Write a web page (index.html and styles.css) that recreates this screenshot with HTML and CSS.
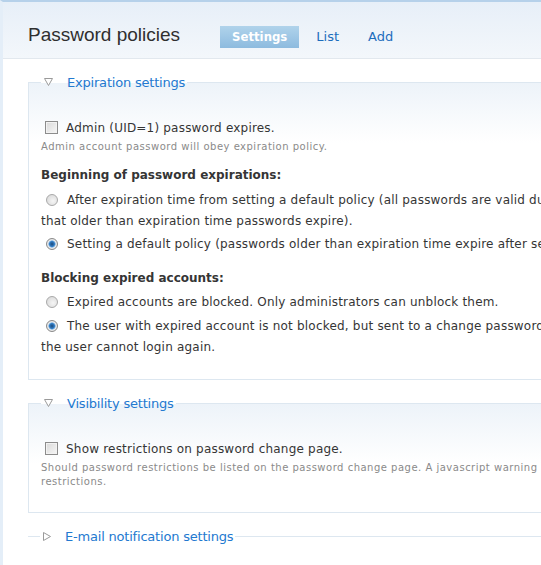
FILE: index.html
```html
<!DOCTYPE html>
<html lang="en">
<head>
<meta charset="utf-8">
<title>Password policies</title>
<link rel="stylesheet" href="styles.css">
</head>
<body>
<div class="page">
  <header class="head">
    <h1 class="title">Password policies</h1>
    <nav class="tabs">
      <a class="tab active" href="#">Settings</a>
      <a class="tab" href="#">List</a>
      <a class="tab" href="#">Add</a>
    </nav>
  </header>

  <form class="content">
    <fieldset class="group">
      <legend class="legend">
        <svg class="arrow" width="9" height="8" viewBox="0 0 9 8"><polygon points="0.5,0.5 8.5,0.5 4.5,7.5" fill="#fff" stroke="#9a9a9a" stroke-width="1"/></svg>
        <span class="legend-text">Expiration settings</span>
      </legend>

      <div class="item item-first">
        <label class="opt"><input class="box" type="checkbox"> Admin (UID=1) password expires.</label>
        <div class="desc">Admin account password will obey expiration policy.</div>
      </div>

      <div class="item">
        <div class="label">Beginning of password expirations:</div>
        <label class="opt"><input class="dot" type="radio" name="begin"> After expiration time from setting a default policy (all passwords are valid during the expiration time, after<br>that older than expiration time passwords expire).</label>
        <label class="opt"><input class="dot" type="radio" name="begin" checked> Setting a default policy (passwords older than expiration time expire after setting the default policy).</label>
      </div>

      <div class="item">
        <div class="label">Blocking expired accounts:</div>
        <label class="opt"><input class="dot" type="radio" name="block"> Expired accounts are blocked. Only administrators can unblock them.</label>
        <label class="opt"><input class="dot" type="radio" name="block" checked> The user with expired account is not blocked, but sent to a change password page. If the password is not changed,<br>the user cannot login again.</label>
      </div>
    </fieldset>

    <fieldset class="group">
      <legend class="legend">
        <svg class="arrow" width="9" height="8" viewBox="0 0 9 8"><polygon points="0.5,0.5 8.5,0.5 4.5,7.5" fill="#fff" stroke="#9a9a9a" stroke-width="1"/></svg>
        <span class="legend-text">Visibility settings</span>
      </legend>

      <div class="item item-first">
        <label class="opt"><input class="box" type="checkbox"> Show restrictions on password change page.</label>
        <div class="desc">Should password restrictions be listed on the password change page. A javascript warning will be shown on the<br>restrictions.</div>
      </div>
    </fieldset>

    <fieldset class="group collapsed">
      <legend class="legend">
        <svg class="arrow" width="8" height="9" viewBox="0 0 8 9"><polygon points="0.5,0.5 7.5,4.5 0.5,8.5" fill="#fff" stroke="#9a9a9a" stroke-width="1"/></svg>
        <span class="legend-text">E-mail notification settings</span>
      </legend>
    </fieldset>
  </form>
</div>
</body>
</html>
```

FILE: styles.css
```css
html, body {
  margin: 0;
  padding: 0;
  background: #fff;
  overflow: hidden;
}

body {
  font-family: "DejaVu Sans", Verdana, sans-serif;
  font-size: 12px;
  letter-spacing: 0.2px;
  color: #353535;
}

.page {
  width: 820px;
  min-height: 565px;
  border-top: 2px solid #b6d1ea;
  border-left: 3px solid #e4eef8;
  box-sizing: border-box;
}

/* Header with title and tabs */
.head {
  display: flex;
  align-items: center;
  height: 57px;
  box-sizing: border-box;
  padding: 14px 0 0 25px;
  background: linear-gradient(#e7eff8, #f3f7fb);
  border-bottom: 1px solid #e2e8ee;
}

.title {
  margin: 0;
  font-family: "Liberation Sans", Arial, sans-serif;
  font-weight: normal;
  font-size: 19px;
  letter-spacing: 0;
  color: #2f2f2f;
  position: relative;
  top: -2px;
}

.tabs {
  display: flex;
  gap: 5px;
  margin-left: 40px;
}

.tab {
  display: block;
  height: 22px;
  line-height: 22px;
  padding: 0 12px;
  font-size: 13px;
  letter-spacing: 0;
  color: #1c6dbd;
  text-decoration: none;
}

.tab.active {
  background: linear-gradient(#b0d3eb, #8dbbdf);
  color: #fff;
  font-weight: bold;
  font-family: "DejaVu Sans Condensed", "DejaVu Sans", sans-serif;
  font-stretch: condensed;
}

/* Form body */
.content {
  padding: 13px 0 0 25px;
}

.group {
  margin: 0 0 13px;
  padding: 0 12px 19px;
  border: 1px solid #dde7f0;
  background: linear-gradient(#edf3f9, #fff 60px);
}

.legend {
  padding: 0 2px 0 3px;
  display: flex;
  align-items: center;
  height: 20px;
}

.arrow {
  display: block;
  margin-right: 14px;
}

.legend-text {
  font-size: 13px;
  letter-spacing: -0.2px;
  color: #2379d0;
}

.collapsed {
  border-width: 1px 0 0;
  background: none;
  padding-bottom: 0;
}

/* Padding rather than margin, so spacing adds up with the trailing margins */
.item {
  padding-top: 10px;
}

.item-first {
  padding-top: 26px;
}

.item-first:last-child {
  padding-bottom: 3px;
}

.label {
  font-weight: bold;
  line-height: 21px;
  letter-spacing: 0;
  margin-bottom: 3.5px;
}

.opt {
  display: block;
  line-height: 21px;
  margin-bottom: 2.5px;
}

.item-first .opt {
  margin-bottom: 0;
}

.desc {
  font-size: 10px;
  letter-spacing: 0.5px;
  line-height: 14px;
  color: #8a8a8a;
  margin: 0.5px 0 1.5px;
}

/* Custom drawn checkbox and radio buttons */
.box, .dot {
  appearance: none;
  -webkit-appearance: none;
  margin: 0 4px;
  vertical-align: -2px;
  box-sizing: border-box;
}

.box {
  width: 13px;
  height: 13px;
  border: 1px solid #8c8c8c;
  background: linear-gradient(135deg, #d9d9d9, #f6f6f6);
  box-shadow: inset 0 0 0 1px #f2f2f2;
}

.dot {
  width: 12px;
  height: 12px;
  border-radius: 50%;
  border: 1px solid #a9a9a9;
  background: radial-gradient(circle at 60% 60%, #f5f5f5, #d4d4d4);
  margin-left: 5px;
  margin-right: 5px;
}

.dot:checked {
  border-color: #8a8a8a;
  background: radial-gradient(circle at 50% 50%, #1e4a78 0, #2f7bc4 2.5px, #9fc4e6 3.5px, #f0f0f0 4px, #d2d2d2 6px);
}
```
